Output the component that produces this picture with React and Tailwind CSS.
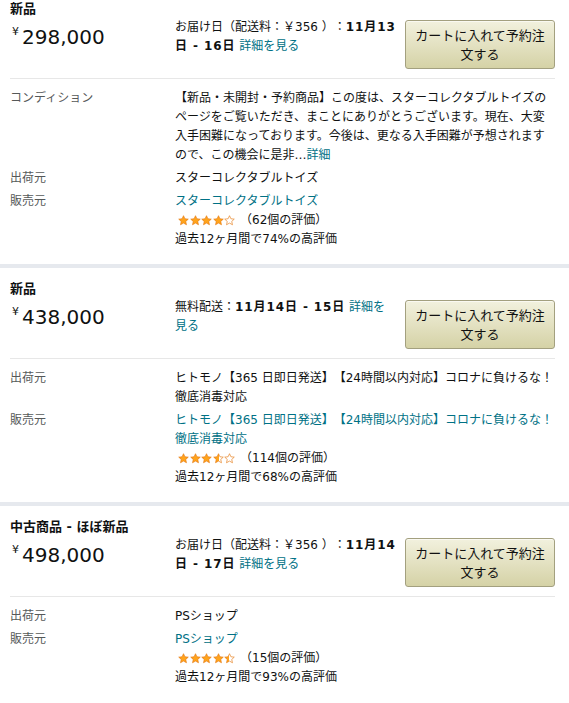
import React from 'react';

const offers = [
  {
    condition: '新品',
    price: '298,000',
    prefix: 'お届け日（配送料：￥356 ）：',
    date: '11月13日 - 16日',
    note: '【新品・未開封・予約商品】この度は、スターコレクタブルトイズのページをご覧いただき、まことにありがとうございます。現在、大変入手困難になっております。今後は、更なる入手困難が予想されますので、この機会に是非…',
    shipper: 'スターコレクタブルトイズ',
    seller: 'スターコレクタブルトイズ',
    stars: ['full', 'full', 'full', 'full', 'empty'],
    count: 62,
    positive: 74,
  },
  {
    condition: '新品',
    price: '438,000',
    prefix: '無料配送：',
    date: '11月14日 - 15日',
    shipper: 'ヒトモノ【365 日即日発送】【24時間以内対応】コロナに負けるな！徹底消毒対応',
    seller: 'ヒトモノ【365 日即日発送】【24時間以内対応】コロナに負けるな！徹底消毒対応',
    stars: ['full', 'full', 'full', 'half', 'empty'],
    count: 114,
    positive: 68,
  },
  {
    condition: '中古商品 - ほぼ新品',
    price: '498,000',
    prefix: 'お届け日（配送料：￥356 ）：',
    date: '11月14日 - 17日',
    shipper: 'PSショップ',
    seller: 'PSショップ',
    stars: ['full', 'full', 'full', 'full', 'half'],
    count: 15,
    positive: 93,
  },
];

const STAR = 'M12 1.5l3.1 6.7 7.3.8-5.5 5 1.6 7.3L12 17.6l-6.5 3.7 1.6-7.3-5.5-5 7.3-.8z';

const Star = ({ type, id }) => (
  <svg width="11" height="11" viewBox="0 0 24 24" className="block">
    <defs>
      <linearGradient id={id} x1="0" x2="1" y1="0" y2="0">
        <stop offset="50%" stopColor="#FFA41C" />
        <stop offset="50%" stopColor="#ffffff" />
      </linearGradient>
    </defs>
    <path
      d={STAR}
      fill={type === 'full' ? '#FFA41C' : type === 'half' ? `url(#${id})` : '#ffffff'}
      stroke="#E47911"
      strokeWidth="1.4"
      strokeLinejoin="round"
    />
  </svg>
);

const Row = ({ label, children }) => (
  <div className="flex">
    <div className="w-[165px] shrink-0 text-[#565959]">{label}</div>
    <div className="w-[378px]">{children}</div>
  </div>
);

const Offer = ({ offer, index }) => (
  <div className={`px-[10px] ${index === 0 ? 'pt-0' : 'pt-[12px] border-t-4 border-[#e6e9ee]'} pb-[15px]`}>
    <div className="text-[13px] font-bold leading-[18px] text-[#0f1111]">{offer.condition}</div>
    <div className="flex items-start border-b border-[#e7e7e7] pb-[9px] w-[545px]">
      <div className="w-[165px] shrink-0 mt-[4px] pl-[2px] flex items-start text-[#0f1111] leading-[30px]">
        <span className="text-[11px] leading-[20px] mr-[3px]">¥</span>
        <span className="text-[20px]">{offer.price}</span>
      </div>
      <div className="w-[222px] shrink-0 text-[12px] leading-[19px] text-[#0f1111]">
        {offer.prefix}
        <span className="font-bold tracking-[0.9px]">{offer.date}</span>{' '}
        <a href="#" className="text-[#007185]">詳細を見る</a>
      </div>
      <button className="ml-[8px] mt-[2px] w-[150px] h-[49px] rounded-[3px] border border-[#a3a07f] bg-linear-to-b from-[#f2f1de] to-[#d5d2a6] shadow-[0_1px_0_rgba(255,255,255,0.6)_inset] text-[13px] leading-[19px] text-[#111] px-[5px]">
        カートに入れて予約注文する
      </button>
    </div>
    <div className="pt-[10px] flex flex-col gap-[4px] text-[12px] leading-[19px] text-[#0f1111]">
      {offer.note && (
        <Row label="コンディション">
          {offer.note}
          <a href="#" className="text-[#007185]">詳細</a>
        </Row>
      )}
      <Row label="出荷元">{offer.shipper}</Row>
      <Row label="販売元">
        <a href="#" className="text-[#007185]">{offer.seller}</a>
        <div className="flex items-center h-[19px] pl-[3px]">
          <div className="flex gap-[0.5px]">
            {offer.stars.map((s, i) => (
              <Star key={i} type={s} id={`half-${index}-${i}`} />
            ))}
          </div>
          <span className="ml-[5px]">（{offer.count}個の評価）</span>
        </div>
        <div>過去12ヶ月間で{offer.positive}%の高評価</div>
      </Row>
    </div>
  </div>
);

export default function App() {
  return (
    <div className="w-[569px] min-h-[703px] bg-white [text-spacing-trim:space-all] font-['DejaVu_Sans','Noto_Sans_CJK_JP',sans-serif]">
      {offers.map((offer, i) => (
        <Offer key={i} offer={offer} index={i} />
      ))}
    </div>
  );
}
